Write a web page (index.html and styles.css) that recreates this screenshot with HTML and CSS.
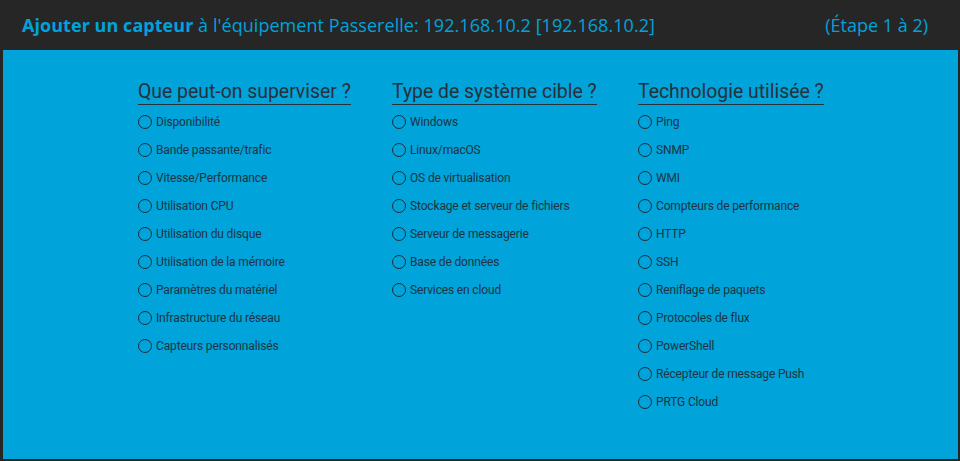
FILE: index.html
```html
<!DOCTYPE html>
<html lang="fr">
<head>
<meta charset="utf-8">
<link rel="stylesheet" href="styles.css">
<title>Ajouter un capteur</title>
</head>
<body>
<div class="frame">
  <header class="top">
    <h1 class="title"><b>Ajouter un capteur</b> à l'équipement Passerelle: 192.168.10.2 [192.168.10.2]</h1>
    <span class="step">(Étape 1 à 2)</span>
  </header>
  <main class="panel">
    <div class="cols">
      <section class="col">
        <h2 class="head">Que peut-on superviser ?</h2>
        <ul class="opts">
          <li><span class="radio"></span>Disponibilité</li>
          <li><span class="radio"></span>Bande passante/trafic</li>
          <li><span class="radio"></span>Vitesse/Performance</li>
          <li><span class="radio"></span>Utilisation CPU</li>
          <li><span class="radio"></span>Utilisation du disque</li>
          <li><span class="radio"></span>Utilisation de la mémoire</li>
          <li><span class="radio"></span>Paramètres du matériel</li>
          <li><span class="radio"></span>Infrastructure du réseau</li>
          <li><span class="radio"></span>Capteurs personnalisés</li>
        </ul>
      </section>
      <section class="col">
        <h2 class="head">Type de système cible ?</h2>
        <ul class="opts">
          <li><span class="radio"></span>Windows</li>
          <li><span class="radio"></span>Linux/macOS</li>
          <li><span class="radio"></span>OS de virtualisation</li>
          <li><span class="radio"></span>Stockage et serveur de fichiers</li>
          <li><span class="radio"></span>Serveur de messagerie</li>
          <li><span class="radio"></span>Base de données</li>
          <li><span class="radio"></span>Services en cloud</li>
        </ul>
      </section>
      <section class="col">
        <h2 class="head">Technologie utilisée ?</h2>
        <ul class="opts">
          <li><span class="radio"></span>Ping</li>
          <li><span class="radio"></span>SNMP</li>
          <li><span class="radio"></span>WMI</li>
          <li><span class="radio"></span>Compteurs de performance</li>
          <li><span class="radio"></span>HTTP</li>
          <li><span class="radio"></span>SSH</li>
          <li><span class="radio"></span>Reniflage de paquets</li>
          <li><span class="radio"></span>Protocoles de flux</li>
          <li><span class="radio"></span>PowerShell</li>
          <li><span class="radio"></span>Récepteur de message Push</li>
          <li><span class="radio"></span>PRTG Cloud</li>
        </ul>
      </section>
    </div>
  </main>
</div>
</body>
</html>
```
FILE: styles.css
```css
html, body {
  margin: 0;
  padding: 0;
  height: 100%;
}
body {
  background: #262626;
  font-family: "Open Sans", "Liberation Sans", sans-serif;
}
.frame {
  height: 461px;
  box-sizing: border-box;
  padding: 0 2px 2px 3px;
  display: flex;
  flex-direction: column;
  background: #262626;
}
.top {
  height: 50px;
  flex: none;
  display: flex;
  align-items: center;
  justify-content: space-between;
  padding: 0 30px 0 19px;
  color: #00a2dc;
}
.title {
  margin: 0;
  font-size: 18px;
  font-weight: 400;
  letter-spacing: 0.05px;
}
.title b {
  font-weight: 700;
}
.step {
  font-size: 18px;
}
.panel {
  flex: 1;
  background: #00a3da;
}
.cols {
  display: grid;
  grid-template-columns: 254px 246px auto;
  padding: 31px 0 0 135px;
}
.head {
  display: inline-block;
  margin: 0;
  font-family: Roboto, "Liberation Sans", sans-serif;
  font-weight: 400;
  font-size: 19.4px;
  line-height: 22px;
  color: #27313a;
  border-bottom: 1px solid #27313a;
  padding-bottom: 1px;
}
.opts {
  list-style: none;
  margin: 3px 0 0;
  padding: 0;
}
.opts li {
  display: flex;
  align-items: center;
  height: 28px;
  font-family: Roboto, "Liberation Sans", sans-serif;
  font-size: 12px;
  color: #1f3340;
  letter-spacing: -0.15px;
}
.radio {
  width: 12px;
  height: 12px;
  border: 1.5px solid #1f2c35;
  border-radius: 50%;
  margin-right: 4px;
  flex: none;
}
```
